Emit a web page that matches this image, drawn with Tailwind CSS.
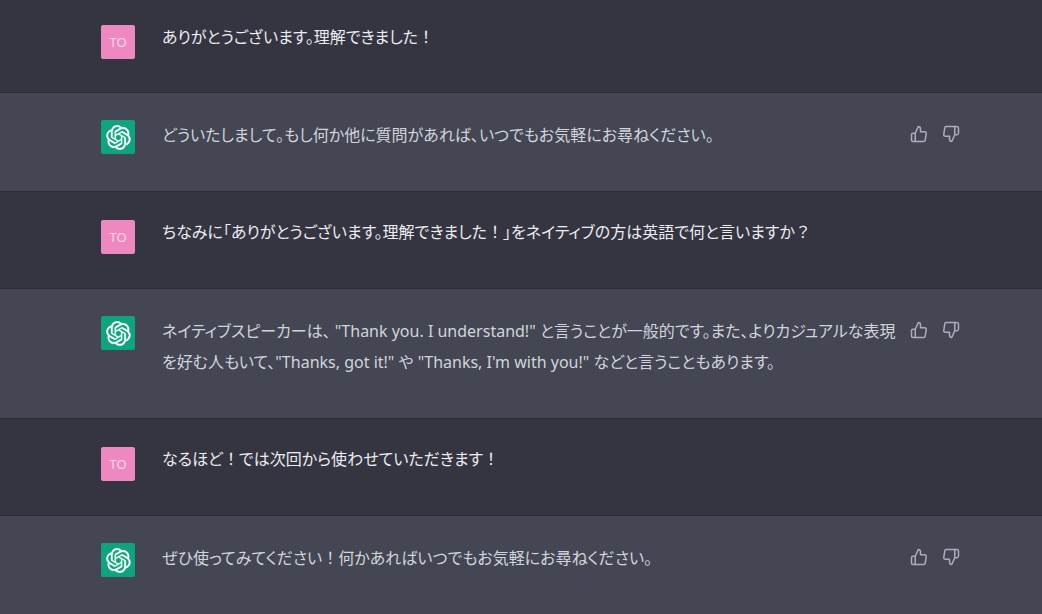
<!DOCTYPE html>
<html lang="ja">
<head>
<meta charset="utf-8">
<meta name="viewport" content="width=device-width, initial-scale=1">
<title>Chat</title>
<script src="https://cdn.jsdelivr.net/npm/@tailwindcss/browser@4"></script>
</head>
<body class="min-h-screen bg-[#444654] font-['Noto_Sans','Noto_Sans_CJK_JP',sans-serif] text-[16px] leading-[31px] [font-feature-settings:'palt']">
<svg class="hidden" aria-hidden="true">
  <symbol id="logo" viewBox="0 0 41 41"><path fill="currentColor" stroke="currentColor" stroke-width=".5" d="M37.532 16.87a9.963 9.963 0 0 0-.856-8.184 10.078 10.078 0 0 0-10.855-4.835A9.964 9.964 0 0 0 18.306.5a10.079 10.079 0 0 0-9.614 6.977 9.967 9.967 0 0 0-6.664 4.834 10.08 10.08 0 0 0 1.24 11.817 9.965 9.965 0 0 0 .856 8.185 10.079 10.079 0 0 0 10.855 4.835 9.965 9.965 0 0 0 7.516 3.35 10.078 10.078 0 0 0 9.617-6.981 9.967 9.967 0 0 0 6.663-4.834 10.079 10.079 0 0 0-1.243-11.813ZM22.498 37.886a7.474 7.474 0 0 1-4.799-1.735c.061-.033.168-.091.237-.134l7.964-4.6a1.294 1.294 0 0 0 .655-1.134V19.054l3.366 1.944a.12.12 0 0 1 .066.092v9.299a7.505 7.505 0 0 1-7.49 7.496ZM6.392 31.006a7.471 7.471 0 0 1-.894-5.023c.06.036.162.099.237.141l7.964 4.6a1.297 1.297 0 0 0 1.308 0l9.724-5.614v3.888a.12.12 0 0 1-.048.103l-8.051 4.649a7.504 7.504 0 0 1-10.24-2.744ZM4.297 13.62A7.469 7.469 0 0 1 8.2 10.333c0 .068-.004.19-.004.274v9.201a1.294 1.294 0 0 0 .654 1.132l9.723 5.614-3.366 1.944a.12.12 0 0 1-.114.01L7.04 23.856a7.504 7.504 0 0 1-2.743-10.237Zm27.658 6.437-9.724-5.615 3.367-1.943a.121.121 0 0 1 .113-.01l8.052 4.648a7.498 7.498 0 0 1-1.158 13.528v-9.476a1.293 1.293 0 0 0-.65-1.132Zm3.35-5.043c-.059-.037-.162-.099-.236-.141l-7.965-4.6a1.298 1.298 0 0 0-1.308 0l-9.723 5.614v-3.888a.12.12 0 0 1 .048-.103l8.05-4.645a7.497 7.497 0 0 1 11.135 7.763Zm-21.063 6.929-3.367-1.944a.12.12 0 0 1-.065-.092v-9.299a7.497 7.497 0 0 1 12.293-5.756 6.94 6.94 0 0 0-.236.134l-7.965 4.6a1.294 1.294 0 0 0-.654 1.132l-.006 11.225Zm1.829-3.943 4.33-2.501 4.332 2.5v5l-4.331 2.5-4.331-2.5V18Z"/></symbol>
  <symbol id="up" viewBox="0 0 24 24"><path fill="none" stroke="currentColor" stroke-width="2" stroke-linecap="round" stroke-linejoin="round" d="M14 9V5a3 3 0 0 0-3-3l-4 9v11h11.28a2 2 0 0 0 2-1.7l1.38-9a2 2 0 0 0-2-2.3zM7 22H4a2 2 0 0 1-2-2v-7a2 2 0 0 1 2-2h3"/></symbol>
  <symbol id="down" viewBox="0 0 24 24"><path fill="none" stroke="currentColor" stroke-width="2" stroke-linecap="round" stroke-linejoin="round" d="M10 15v4a3 3 0 0 0 3 3l4-9V2H5.720a2 2 0 0 0-2 1.7l-1.38 9a2 2 0 0 0 2 2.3zm7-13h2.670A2.310 2.310 0 0 1 22 4v7a2.310 2.310 0 0 1-2.330 2H17"/></symbol>
</svg>
<main>
  <article class="border-b border-[#2b2c35] bg-[#343541] pr-[82px] pl-[81px] pt-[22px] pb-[33px] text-[#ececf1]">
    <div class="mx-auto flex max-w-[880px] items-start pl-5">
      <div class="mt-[3px] flex size-[34px] shrink-0 items-center justify-center rounded-xs bg-[#ed88c0] text-[13px] text-[#fbd5ea]">TO</div>
      <p class="ml-[27px] flex-1">ありがとうございます。理解できました<span class="[font-feature-settings:normal]">！</span></p>
    </div>
  </article>
  <article class="border-b border-[#2b2c35] bg-[#444654] pr-[82px] pl-[81px] pt-[27px] pb-[37px] text-[#d1d5db]">
    <div class="mx-auto flex max-w-[880px] items-start pl-5">
      <div class="flex size-[34px] shrink-0 items-center justify-center rounded-xs bg-[#10a37f] text-white"><svg class="size-[25px]"><use href="#logo"/></svg></div>
      <p class="ml-[27px] flex-1">どういたしまして。もし何か他に質問があれば、いつでもお気軽にお尋ねください。</p>
      <div class="mt-[5px] ml-3 flex h-[18px] shrink-0 gap-[14px] text-[#acacbe]">
        <button type="button" aria-label="Good response"><svg class="size-[18px]"><use href="#up"/></svg></button>
        <button type="button" aria-label="Bad response"><svg class="size-[18px]"><use href="#down"/></svg></button>
      </div>
    </div>
  </article>
  <article class="border-b border-[#2b2c35] bg-[#343541] pr-[82px] pl-[81px] pt-[25px] pb-[34px] text-[#ececf1]">
    <div class="mx-auto flex max-w-[880px] items-start pl-5">
      <div class="mt-[3px] flex size-[34px] shrink-0 items-center justify-center rounded-xs bg-[#ed88c0] text-[13px] text-[#fbd5ea]">TO</div>
      <p class="ml-[27px] flex-1">ちなみに「ありがとうございます。理解できました<span class="[font-feature-settings:normal]">！</span>」をネイティブの方は英語で何と言いますか<span class="[font-feature-settings:normal]">？</span></p>
    </div>
  </article>
  <article class="border-b border-[#2b2c35] bg-[#444654] pr-[82px] pl-[81px] pt-[27px] pb-10 text-[#d1d5db]">
    <div class="mx-auto flex max-w-[880px] items-start pl-5">
      <div class="flex size-[34px] shrink-0 items-center justify-center rounded-xs bg-[#10a37f] text-white"><svg class="size-[25px]"><use href="#logo"/></svg></div>
      <p class="ml-[27px] flex-1">ネイティブスピーカーは、 "Thank you. I understand!" と言うことが一般的です。また、よりカジュアルな表現を好む人もいて、"Thanks, got it!" や "Thanks, I'm with you!" などと言うこともあります。</p>
      <div class="mt-[5px] ml-3 flex h-[18px] shrink-0 gap-[14px] text-[#acacbe]">
        <button type="button" aria-label="Good response"><svg class="size-[18px]"><use href="#up"/></svg></button>
        <button type="button" aria-label="Bad response"><svg class="size-[18px]"><use href="#down"/></svg></button>
      </div>
    </div>
  </article>
  <article class="border-b border-[#2b2c35] bg-[#343541] pr-[82px] pl-[81px] pt-[25px] pb-[34px] text-[#ececf1]">
    <div class="mx-auto flex max-w-[880px] items-start pl-5">
      <div class="mt-[3px] flex size-[34px] shrink-0 items-center justify-center rounded-xs bg-[#ed88c0] text-[13px] text-[#fbd5ea]">TO</div>
      <p class="ml-[27px] flex-1">なるほど<span class="[font-feature-settings:normal]">！</span>では次回から使わせていただきます<span class="[font-feature-settings:normal]">！</span></p>
    </div>
  </article>
  <article class="bg-[#444654] pr-[82px] pl-[81px] pt-[27px] pb-9 text-[#d1d5db]">
    <div class="mx-auto flex max-w-[880px] items-start pl-5">
      <div class="flex size-[34px] shrink-0 items-center justify-center rounded-xs bg-[#10a37f] text-white"><svg class="size-[25px]"><use href="#logo"/></svg></div>
      <p class="ml-[27px] flex-1">ぜひ使ってみてください<span class="[font-feature-settings:normal]">！</span>何かあればいつでもお気軽にお尋ねください。</p>
      <div class="mt-[5px] ml-3 flex h-[18px] shrink-0 gap-[14px] text-[#acacbe]">
        <button type="button" aria-label="Good response"><svg class="size-[18px]"><use href="#up"/></svg></button>
        <button type="button" aria-label="Bad response"><svg class="size-[18px]"><use href="#down"/></svg></button>
      </div>
    </div>
  </article>
</main>
</body>
</html>
